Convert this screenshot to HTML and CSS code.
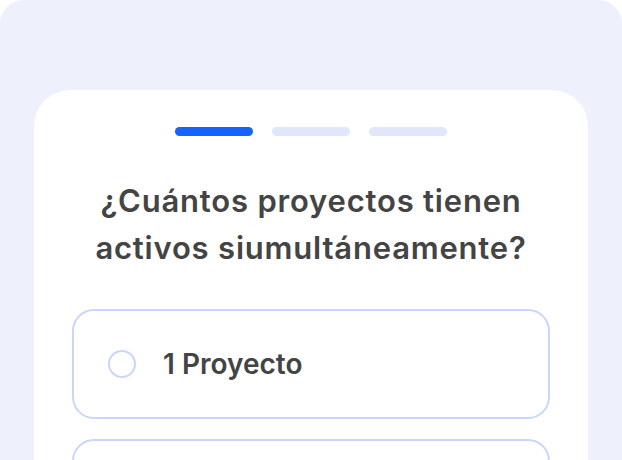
FILE: index.html
```html
<!DOCTYPE html>
<html lang="es">

<head>
    <meta charset="UTF-8">
    <meta name="viewport" content="width=device-width, initial-scale=1.0">
    <title>Encuesta</title>

    <link rel="stylesheet" href="styles.css">
</head>

<body>
    <div class="panel">
        <div class="card">
            <div class="steps">
                <span class="step active"></span>
                <span class="step"></span>
                <span class="step"></span>
            </div>

            <h1 class="question">¿Cuántos proyectos tienen activos siumultáneamente?</h1>

            <ul class="options">
                <li class="option">
                    <span class="radio"></span>
                    <span class="option-label">1 Proyecto</span>
                </li>
                <li class="option">
                    <span class="radio"></span>
                </li>
            </ul>
        </div>
    </div>
</body>

</html>
```

FILE: styles.css
```css
* {
    margin: 0;
    padding: 0;
    box-sizing: border-box;
}

body {
    background: #fff;
    font-family: Inter, 'Noto Sans', sans-serif;
    width: 622px;
    height: 460px;
    overflow: hidden;
}

.panel {
    background-color: #eef0fb;
    border-radius: 24px 24px 0 0;
    height: 460px;
    padding: 90px 34px 0;
    overflow: hidden;
}

.card {
    background: #fff;
    border-radius: 36px 36px 0 0;
    height: 370px;
    padding: 37px 38px 0;
    overflow: hidden;
}

.steps {
    display: flex;
    justify-content: center;
    gap: 19px;
}

.step {
    width: 78px;
    height: 9px;
    border-radius: 5px;
    background: #e2e6fa;
}

.step.active {
    background: #1463ff;
}

.question {
    margin-top: 41px;
    font-size: 31px;
    font-weight: 600;
    line-height: 47px;
    letter-spacing: 0.8px;
    color: #444;
    text-align: center;
}

.options {
    list-style: none;
    margin-top: 38px;
    display: flex;
    flex-direction: column;
    gap: 20px;
}

.option {
    display: flex;
    align-items: center;
    height: 110px;
    border: 2px solid #c8d7f9;
    border-radius: 22px;
    padding-left: 34px;
    flex-shrink: 0;
}

.radio {
    width: 28px;
    height: 28px;
    border-radius: 50%;
    border: 2px solid #c8d7f9;
    margin-right: 27px;
}

.option-label {
    font-size: 28px;
    font-weight: 600;
    color: #444;
}
```
